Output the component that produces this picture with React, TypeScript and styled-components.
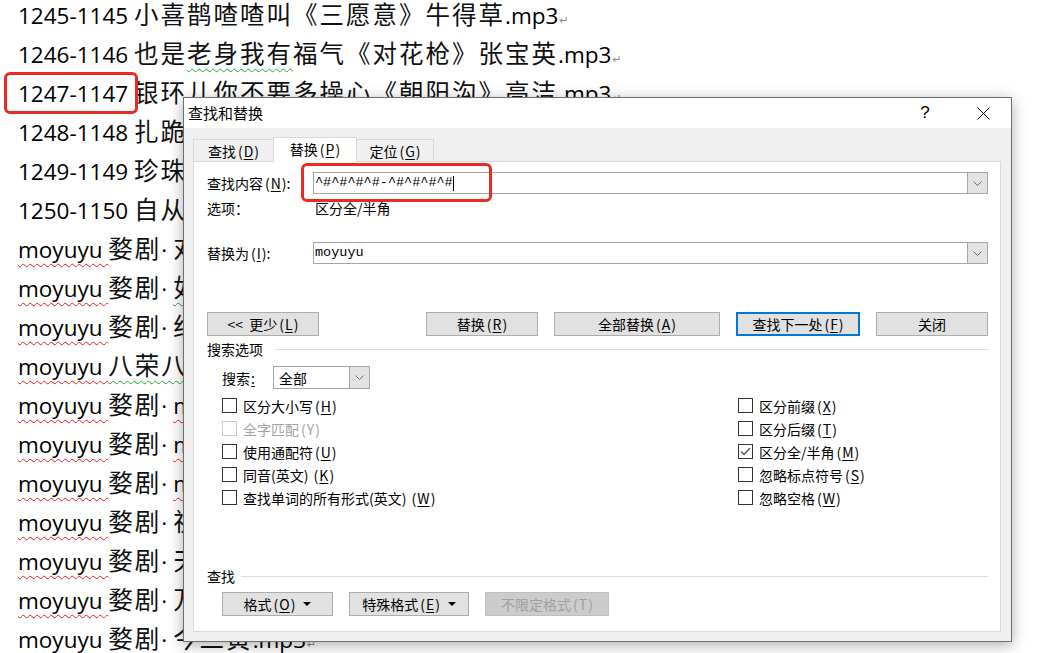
import React from 'react';
import styled, { createGlobalStyle, css } from 'styled-components';

const GlobalStyle = createGlobalStyle`
  html, body {
    margin: 0;
    padding: 0;
    background: #ffffff;
  }
  body {
    font-family: "Noto Sans CJK SC", "Noto Sans", sans-serif;
  }
`;

const Page = styled.div`
  position: relative;
  width: 1055px;
  height: 653px;
  overflow: hidden;
  background: #ffffff;
`;

/* ---------- document behind the dialog ---------- */

const Doc = styled.div`
  margin-top: -6px;
  padding-left: 18px;
`;

const Line = styled.div`
  display: flex;
  align-items: baseline;
  height: 39px;
  line-height: 39px;
  white-space: pre;
  color: #000;
`;

const wavy = (c?: string) =>
  c &&
  css`
    text-decoration: underline wavy ${c};
    text-decoration-thickness: 1px;
    text-underline-offset: 5px;
  `;

const Latin = styled.span<{ $wavy?: string; $boxed?: boolean }>`
  position: relative;
  font-family: "Open Sans", "Liberation Sans", sans-serif;
  font-size: 22.5px;
  ${p => wavy(p.$wavy)}
  ${p =>
    p.$boxed &&
    css`
      &::before {
        content: '';
        position: absolute;
        left: -14px;
        right: -4px;
        top: -2px;
        bottom: -1px;
        border: 3px solid #ec2a24;
        border-radius: 6px;
      }
    `}
`;

const Han = styled.span<{ $wavy?: string }>`
  font-family: "Noto Sans CJK SC", sans-serif;
  font-size: 24.5px;
  letter-spacing: 2px;
  color: #111;
  ${p => wavy(p.$wavy)}
`;

const Mark = styled.span`
  font-family: "DejaVu Sans", sans-serif;
  font-size: 11px;
  color: #8a8a8a;
  margin-left: 1px;
`;

/* ---------- dialog ---------- */

const Dialog = styled.div`
  position: absolute;
  left: 183px;
  top: 97px;
  width: 829px;
  height: 545px;
  box-sizing: border-box;
  border: 1px solid #6e6e6e;
  background: #f0f0f0;
  box-shadow: 0 3px 14px rgba(0, 0, 0, 0.32);
  display: flex;
  flex-direction: column;
  font-family: "Noto Sans CJK SC", "Noto Sans", sans-serif;
  font-size: 14px;
  line-height: 16px;
  color: #000;
`;

const TitleBar = styled.div`
  height: 30px;
  background: #ffffff;
  display: flex;
  align-items: center;
  padding: 0 5px 0 4px;
`;

const TitleText = styled.div`
  flex: 1;
  font-size: 15px;
`;

const TitleButton = styled.div<{ $gap?: number }>`
  width: 46px;
  height: 30px;
  display: flex;
  align-items: center;
  justify-content: center;
  margin-right: ${p => p.$gap || 0}px;
  font-family: "Liberation Sans", sans-serif;
  font-size: 17px;
`;

const Body = styled.div`
  flex: 1;
  display: flex;
  flex-direction: column;
  padding: 9px 10px 9px 9px;
`;

const TabStrip = styled.div`
  display: flex;
  align-items: flex-end;
  height: 24px;
`;

const Tab = styled.div<{ $w: number; $active?: boolean }>`
  position: relative;
  box-sizing: border-box;
  width: ${p => p.$w}px;
  height: 22px;
  border: 1px solid #d9d9d9;
  border-bottom: none;
  background: #f0f0f0;
  display: flex;
  align-items: center;
  justify-content: center;
  & + & {
    margin-left: -1px;
  }
  ${p =>
    p.$active &&
    css`
      height: 25px;
      margin-bottom: -1px;
      background: #ffffff;
      z-index: 1;
      padding-bottom: 3px;
    `}
`;

const Panel = styled.div`
  flex: 1;
  background: #ffffff;
  border: 1px solid #d9d9d9;
  padding: 10px 12px 0 13px;
  display: flex;
  flex-direction: column;
`;

const FieldRow = styled.div<{ $top?: number }>`
  position: relative;
  display: flex;
  align-items: center;
  height: 22px;
  margin-top: ${p => p.$top || 0}px;
`;

const FieldLabel = styled.div`
  width: 106px;
  flex: none;
`;

const Combo = styled.div`
  flex: 1;
  height: 22px;
  box-sizing: border-box;
  border: 1px solid #a6a6a6;
  display: flex;
  background: #ffffff;
`;

const ComboText = styled.div`
  flex: 1;
  padding-left: 1px;
  font-family: "Liberation Mono", monospace;
  font-size: 13.5px;
  line-height: 20px;
  display: flex;
  align-items: center;
`;

const Caret = styled.span`
  width: 1px;
  height: 15px;
  background: #000;
`;

const ComboArrow = styled.div`
  width: 20px;
  box-sizing: border-box;
  border-left: 1px solid #a6a6a6;
  background: #e3e3e3;
  display: flex;
  align-items: center;
  justify-content: center;
`;

const Annotation = styled.div`
  position: absolute;
  left: 94px;
  top: -9px;
  width: 191px;
  height: 39px;
  box-sizing: border-box;
  border: 3px solid #ec2a24;
  border-radius: 6px;
  pointer-events: none;
  z-index: 2;
`;

const OptionLine = styled.div`
  display: flex;
  height: 16px;
  margin-top: 6px;
`;

const OptionValue = styled.div`
  padding-left: 2px;
`;

const ButtonRow = styled.div`
  display: flex;
  gap: 16px;
  height: 24px;
  margin-top: 48px;
`;

const Button = styled.div<{ $w: number; $primary?: boolean; $disabled?: boolean; $push?: boolean }>`
  box-sizing: border-box;
  width: ${p => p.$w}px;
  height: 24px;
  border: 1px solid #adadad;
  background: #e1e1e1;
  display: flex;
  align-items: center;
  justify-content: center;
  white-space: pre;
  ${p => p.$push && 'margin-right: auto;'}
  ${p => p.$primary && 'border: 2px solid #0078d7;'}
  ${p =>
    p.$disabled &&
    css`
      background: #cccccc;
      border-color: #bfbfbf;
      color: #a0a0a0;
    `}
`;

const SectionHeader = styled.div<{ $top: number; $gap: number }>`
  display: flex;
  align-items: center;
  height: 16px;
  margin-top: ${p => p.$top}px;
  gap: ${p => p.$gap}px;
  &::after {
    content: '';
    flex: 1;
    height: 1px;
    background: #dcdcdc;
  }
`;

const SearchRow = styled.div`
  display: flex;
  align-items: center;
  margin-top: 9px;
  padding-left: 15px;
`;

const SearchLabel = styled.div`
  width: 51px;
`;

const Select = styled.div`
  width: 97px;
  height: 23px;
  box-sizing: border-box;
  border: 1px solid #a6a6a6;
  display: flex;
`;

const SelectText = styled.div`
  flex: 1;
  padding-left: 5px;
  display: flex;
  align-items: center;
`;

const CheckGrid = styled.div`
  display: grid;
  grid-template-columns: 516px 1fr;
  grid-template-rows: repeat(5, 23px);
  grid-auto-flow: column;
  margin-top: 5px;
  padding-left: 15px;
`;

const CheckItem = styled.div<{ $disabled?: boolean }>`
  display: flex;
  align-items: center;
  gap: 6px;
  color: ${p => (p.$disabled ? '#a3a3a3' : '#000')};
`;

const Box = styled.span<{ $disabled?: boolean }>`
  width: 15px;
  height: 15px;
  box-sizing: border-box;
  border: 1px solid ${p => (p.$disabled ? '#cccccc' : '#333333')};
  background: #ffffff;
  display: flex;
  align-items: center;
  justify-content: center;
`;

const FormatRow = styled.div`
  display: flex;
  gap: 16px;
  margin-top: 8px;
  padding-left: 15px;
`;

const Key = styled.span`
  padding-left: 2px;
`;

const U = styled.span`
  padding: 0 1px;
  text-decoration: underline;
  text-underline-offset: 2px;
`;

const Tri = styled.svg`
  margin-left: 8px;
`;

const Mn = ({ k, plain }: { k: string; plain?: boolean }) => (
  <Key>({plain ? <span style={{ padding: '0 1px' }}>{k}</span> : <U>{k}</U>})</Key>
);

const Chevron = () => (
  <svg width="9" height="5" viewBox="0 0 9 5">
    <polyline points="0.5,0.5 4.5,4.5 8.5,0.5" fill="none" stroke="#6a6a6a" strokeWidth="1" />
  </svg>
);

const DropTri = () => (
  <Tri width="8" height="4" viewBox="0 0 8 4">
    <polygon points="0,0 8,0 4,4" fill="#000" />
  </Tri>
);

const Check = ({ label, checked, disabled }: { label: React.ReactNode; checked?: boolean; disabled?: boolean }) => (
  <CheckItem $disabled={disabled}>
    <Box $disabled={disabled}>
      {checked && (
        <svg width="11" height="9" viewBox="0 0 11 9">
          <polyline points="1,4.5 4,7.5 10,1" fill="none" stroke="#555" strokeWidth="1.3" />
        </svg>
      )}
    </Box>
    <span>{label}</span>
  </CheckItem>
);

const MoRow = ({ rest, restWavy, dot = true }: { rest: string; restWavy?: string; dot?: boolean }) => (
  <Line>
    <Latin $wavy="#e02020">moyuyu </Latin>
    {dot ? (
      <>
        <Han>婺剧</Han>
        <Latin>· </Latin>
        {/^[a-z]/.test(rest) ? <Latin $wavy={restWavy}>{rest}</Latin> : <Han $wavy={restWavy}>{rest}</Han>}
      </>
    ) : (
      <Han $wavy={restWavy}>{rest}</Han>
    )}
    <Latin>.mp3</Latin>
    <Mark>↵</Mark>
  </Line>
);

export default function App() {
  return (
    <Page>
      <GlobalStyle />
      <Doc>
        <Line>
          <Latin>1245-1145 </Latin>
          <Han>小喜鹊喳喳叫《三愿意》牛得草</Han>
          <Latin>.mp3</Latin>
          <Mark>↵</Mark>
        </Line>
        <Line>
          <Latin>1246-1146 </Latin>
          <Han>也是</Han>
          <Han $wavy="#2aa52a">老身我有</Han>
          <Han>福气《对花枪》张宝英</Han>
          <Latin>.mp3</Latin>
          <Mark>↵</Mark>
        </Line>
        <Line>
          <Latin $boxed>1247-1147 </Latin>
          <Han>银环儿你不要多操心《朝阳沟》高洁</Han>
          <Latin>.mp3</Latin>
          <Mark>↵</Mark>
        </Line>
        <Line>
          <Latin>1248-1148 </Latin>
          <Han>扎跪在尘埃</Han>
          <Latin>.mp3</Latin>
          <Mark>↵</Mark>
        </Line>
        <Line>
          <Latin>1249-1149 </Latin>
          <Han>珍珠倒卷帘</Han>
          <Latin>.mp3</Latin>
          <Mark>↵</Mark>
        </Line>
        <Line>
          <Latin>1250-1150 </Latin>
          <Han>自从那日</Han>
          <Latin>.mp3</Latin>
          <Mark>↵</Mark>
        </Line>
        <MoRow rest="对花枪" />
        <MoRow rest="如意" restWavy="#2aa52a" />
        <MoRow rest="红灯" />
        <MoRow rest="八荣八耻" restWavy="#2aa52a" dot={false} />
        <MoRow rest="mudan" restWavy="#e02020" />
        <MoRow rest="mudan" restWavy="#e02020" />
        <MoRow rest="mudan" restWavy="#e02020" />
        <MoRow rest="祝福" />
        <MoRow rest="天仙配" />
        <MoRow rest="万年青" />
        <MoRow rest="今二黄" />
      </Doc>

      <Dialog>
        <TitleBar>
          <TitleText>查找和替换</TitleText>
          <TitleButton $gap={12}>?</TitleButton>
          <TitleButton>
            <svg width="13" height="13" viewBox="0 0 13 13">
              <path d="M0.5 0.5 L12.5 12.5 M12.5 0.5 L0.5 12.5" stroke="#000" strokeWidth="1" />
            </svg>
          </TitleButton>
        </TitleBar>
        <Body>
          <TabStrip>
            <Tab $w={81}>
              查找<Mn k="D" />
            </Tab>
            <Tab $w={84} $active>
              替换<Mn k="P" />
            </Tab>
            <Tab $w={78}>
              定位<Mn k="G" />
            </Tab>
          </TabStrip>
          <Panel>
            <FieldRow>
              <FieldLabel>
                查找内容<Mn k="N" />:
              </FieldLabel>
              <Combo>
                <ComboText>
                  ^#^#^#^#-^#^#^#^#
                  <Caret />
                </ComboText>
                <ComboArrow>
                  <Chevron />
                </ComboArrow>
              </Combo>
              <Annotation />
            </FieldRow>
            <OptionLine>
              <FieldLabel>选项：</FieldLabel>
              <OptionValue>区分全/半角</OptionValue>
            </OptionLine>
            <FieldRow $top={26}>
              <FieldLabel>
                替换为<Mn k="I" />:
              </FieldLabel>
              <Combo>
                <ComboText>moyuyu</ComboText>
                <ComboArrow>
                  <Chevron />
                </ComboArrow>
              </Combo>
            </FieldRow>
            <ButtonRow>
              <Button $w={112} $push>
                {'<<  更少'}
                <Mn k="L" />
              </Button>
              <Button $w={112}>
                替换<Mn k="R" />
              </Button>
              <Button $w={166}>
                全部替换<Mn k="A" />
              </Button>
              <Button $w={124} $primary>
                查找下一处<Mn k="F" />
              </Button>
              <Button $w={112}>关闭</Button>
            </ButtonRow>

            <SectionHeader $top={5} $gap={13}>
              搜索选项
            </SectionHeader>
            <SearchRow>
              <SearchLabel>
                搜索<U>:</U>
              </SearchLabel>
              <Select>
                <SelectText>全部</SelectText>
                <ComboArrow>
                  <Chevron />
                </ComboArrow>
              </Select>
            </SearchRow>
            <CheckGrid>
              <Check label={<>区分大小写<Mn k="H" /></>} />
              <Check disabled label={<>全字匹配<Mn k="Y" plain /></>} />
              <Check label={<>使用通配符<Mn k="U" /></>} />
              <Check label={<>同音(英文) <Mn k="K" /></>} />
              <Check label={<>查找单词的所有形式(英文) <Mn k="W" /></>} />
              <Check label={<>区分前缀<Mn k="X" /></>} />
              <Check label={<>区分后缀<Mn k="T" /></>} />
              <Check checked label={<>区分全/半角<Mn k="M" /></>} />
              <Check label={<>忽略标点符号<Mn k="S" /></>} />
              <Check label={<>忽略空格<Mn k="W" /></>} />
            </CheckGrid>

            <SectionHeader $top={59} $gap={6}>
              查找
            </SectionHeader>
            <FormatRow>
              <Button $w={111}>
                格式<Mn k="O" />
                <DropTri />
              </Button>
              <Button $w={120}>
                特殊格式<Mn k="E" />
                <DropTri />
              </Button>
              <Button $w={124} $disabled>
                不限定格式<Mn k="T" plain />
              </Button>
            </FormatRow>
          </Panel>
        </Body>
      </Dialog>
    </Page>
  );
}
